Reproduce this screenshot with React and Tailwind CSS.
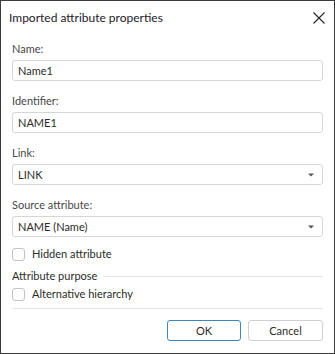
import React from 'react';

const FONT = { fontFamily: 'Lato, "Noto Sans", "Liberation Sans", sans-serif' };

function Field({ label, value, select }) {
  return (
    <div className="flex flex-col">
      <label className="h-[16px] text-[11px] leading-[16px] text-[#474747] mb-[3px]">{label}</label>
      <div className="h-[21px] flex items-center justify-between border border-[#d6d6d6] rounded-[3px] bg-white pl-[5px] pr-[8px]">
        <span className="text-[11px] leading-[16px] text-[#2b2b2b]">{value}</span>
        {select && (
          <svg width="6" height="4" viewBox="0 0 6 4" className="block">
            <path d="M0 0.5 L6 0.5 L3 3.5 Z" fill="#555555" />
          </svg>
        )}
      </div>
    </div>
  );
}

function Check({ label }) {
  return (
    <div className="flex items-center h-[16px]">
      <span className="w-[13px] h-[13px] border border-[#c4c4c4] rounded-[3px] bg-white mr-[7px]" />
      <span className="text-[11px] leading-[16px] text-[#2b2b2b]">{label}</span>
    </div>
  );
}

export default function App() {
  return (
    <div style={FONT} className="w-[335px] h-[354px] bg-white border border-[#3a3a3a] flex flex-col">
      <div className="h-[32px] flex items-center justify-between pl-[8px] pr-[9px] pt-[1px]">
        <span className="text-[12px] leading-[18px] text-[#1e1a2a]">Imported attribute properties</span>
        <svg width="12" height="12" viewBox="0 0 12 12" className="block">
          <path d="M0.5 0.5 L11.5 11.5 M11.5 0.5 L0.5 11.5" stroke="#222" strokeWidth="1.1" />
        </svg>
      </div>
      <div className="flex flex-col px-[11px] pt-[8px]">
        <div className="flex flex-col gap-[12px]">
          <Field label="Name:" value="Name1" />
          <Field label="Identifier:" value="NAME1" />
          <Field label="Link:" value="LINK" select />
          <Field label="Source attribute:" value="NAME (Name)" select />
        </div>
        <div className="mt-[9px]">
          <Check label="Hidden attribute" />
        </div>
        <div className="mt-[6px] flex items-center h-[16px]">
          <span className="text-[11px] leading-[16px] text-[#2b2b2b] mr-[6px]">Attribute purpose</span>
          <div className="flex-1 h-px bg-[#e6e6e6]" />
        </div>
        <div className="mt-[2px]">
          <Check label="Alternative hierarchy" />
        </div>
        <div className="mt-[6px] h-px bg-[#e6e6e6]" />
        <div className="mt-[11px] flex justify-end gap-[7px]">
          <button className="w-[74px] h-[21px] border border-[#3c86c4] rounded-[3px] bg-white text-[11px] leading-[16px] text-[#2b2b2b]">OK</button>
          <button className="w-[75px] h-[21px] border border-[#d0d0d0] rounded-[3px] bg-white text-[11px] leading-[16px] text-[#2b2b2b]">Cancel</button>
        </div>
      </div>
    </div>
  );
}
